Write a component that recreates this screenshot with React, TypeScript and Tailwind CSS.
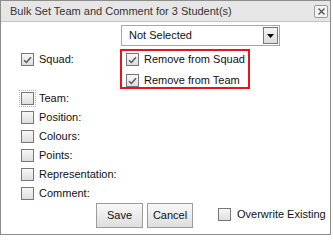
import React from "react";

function Box({ checked, focus }: { checked?: boolean; focus?: boolean }) {
  return (
    <span
      className={
        "relative flex w-[13px] h-[13px] shrink-0 items-center justify-center border border-[#777] bg-gradient-to-b from-[#f7f7f7] to-[#dedede] " +
        (focus ? "outline outline-1 outline-dotted outline-[#e6b800] outline-offset-1" : "")
      }
    >
      {checked && (
        <svg width="9" height="8" viewBox="0 0 9 8" fill="none">
          <path d="M1 4.2 L3.4 6.5 L8 1.2" stroke="#5c5c5c" strokeWidth="1.5" />
        </svg>
      )}
    </span>
  );
}

function Row({ label, focus }: { label: string; focus?: boolean }) {
  return (
    <div className="flex h-[19px] items-start gap-[5px]">
      <Box focus={focus} />
      <span className="leading-[13px]">{label}</span>
    </div>
  );
}

export default function App() {
  return (
    <div className="w-[331px] h-[235px] border border-[#8c8c8c] bg-white text-[11px] text-[#111] font-['Liberation_Sans',Arial,sans-serif]">
      {/* заголовок */}
      <div className="flex h-[21px] items-center justify-between border-b border-[#c4c4c4] bg-[#e6e6e6] pl-[9px] pr-[2px]">
        <span className="text-[#333]">Bulk Set Team and Comment for 3 Student(s)</span>
        <button className="flex w-[14px] h-[13px] items-center justify-center rounded-[2px] border border-[#9a9a9a] bg-[#f4f4f4]">
          <svg width="7" height="7" viewBox="0 0 7 7">
            <path d="M0.5 0.5 L6.5 6.5 M6.5 0.5 L0.5 6.5" stroke="#555" strokeWidth="1.4" />
          </svg>
        </button>
      </div>

      <div className="pl-[20px]">
        {/* выпадающий список */}
        <div className="ml-[100px] mt-[3px] flex w-[159px] h-[21px] items-center justify-between border border-[#a8a8a8] bg-white pl-[7px] pr-[1px]">
          <span>Not Selected</span>
          <span className="flex w-[15px] h-[17px] items-center justify-center border border-[#777] bg-gradient-to-b from-[#f4f4f4] to-[#dcdcdc]">
            <svg width="7" height="4" viewBox="0 0 7 4">
              <path d="M0 0 L7 0 L3.5 4 Z" fill="#000" />
            </svg>
          </span>
        </div>

        <div className="mt-[3px] flex">
          <div className="flex w-[99px] items-start gap-[5px] pt-[4px]">
            <Box checked />
            <span className="leading-[13px]">Squad:</span>
          </div>
          <div className="flex w-[130px] h-[40px] flex-col gap-[8px] border-2 border-[#e8141b] pl-[4px] pt-[2px]">
            <div className="flex items-center gap-[5px]">
              <Box checked />
              <span className="leading-[13px]">Remove from Squad</span>
            </div>
            <div className="flex items-center gap-[5px]">
              <Box checked />
              <span className="leading-[13px]">Remove from Team</span>
            </div>
          </div>
        </div>

        <div className="mt-[3px] flex flex-col">
          <Row label="Team:" focus />
          <Row label="Position:" />
          <Row label="Colours:" />
          <Row label="Points:" />
          <Row label="Representation:" />
          <Row label="Comment:" />
        </div>

        <div className="mt-[-3px] flex items-center">
          <button className="ml-[75px] w-[47px] h-[25px] border border-[#9c9c9c] bg-gradient-to-b from-[#f8f8f8] to-[#dedede]">
            Save
          </button>
          <button className="ml-[4px] w-[46px] h-[25px] border border-[#9c9c9c] bg-gradient-to-b from-[#f8f8f8] to-[#dedede]">
            Cancel
          </button>
          <div className="ml-[25px] flex items-center gap-[6px] pb-[2px]">
            <Box />
            <span className="leading-[13px]">Overwrite Existing</span>
          </div>
        </div>
      </div>
    </div>
  );
}
